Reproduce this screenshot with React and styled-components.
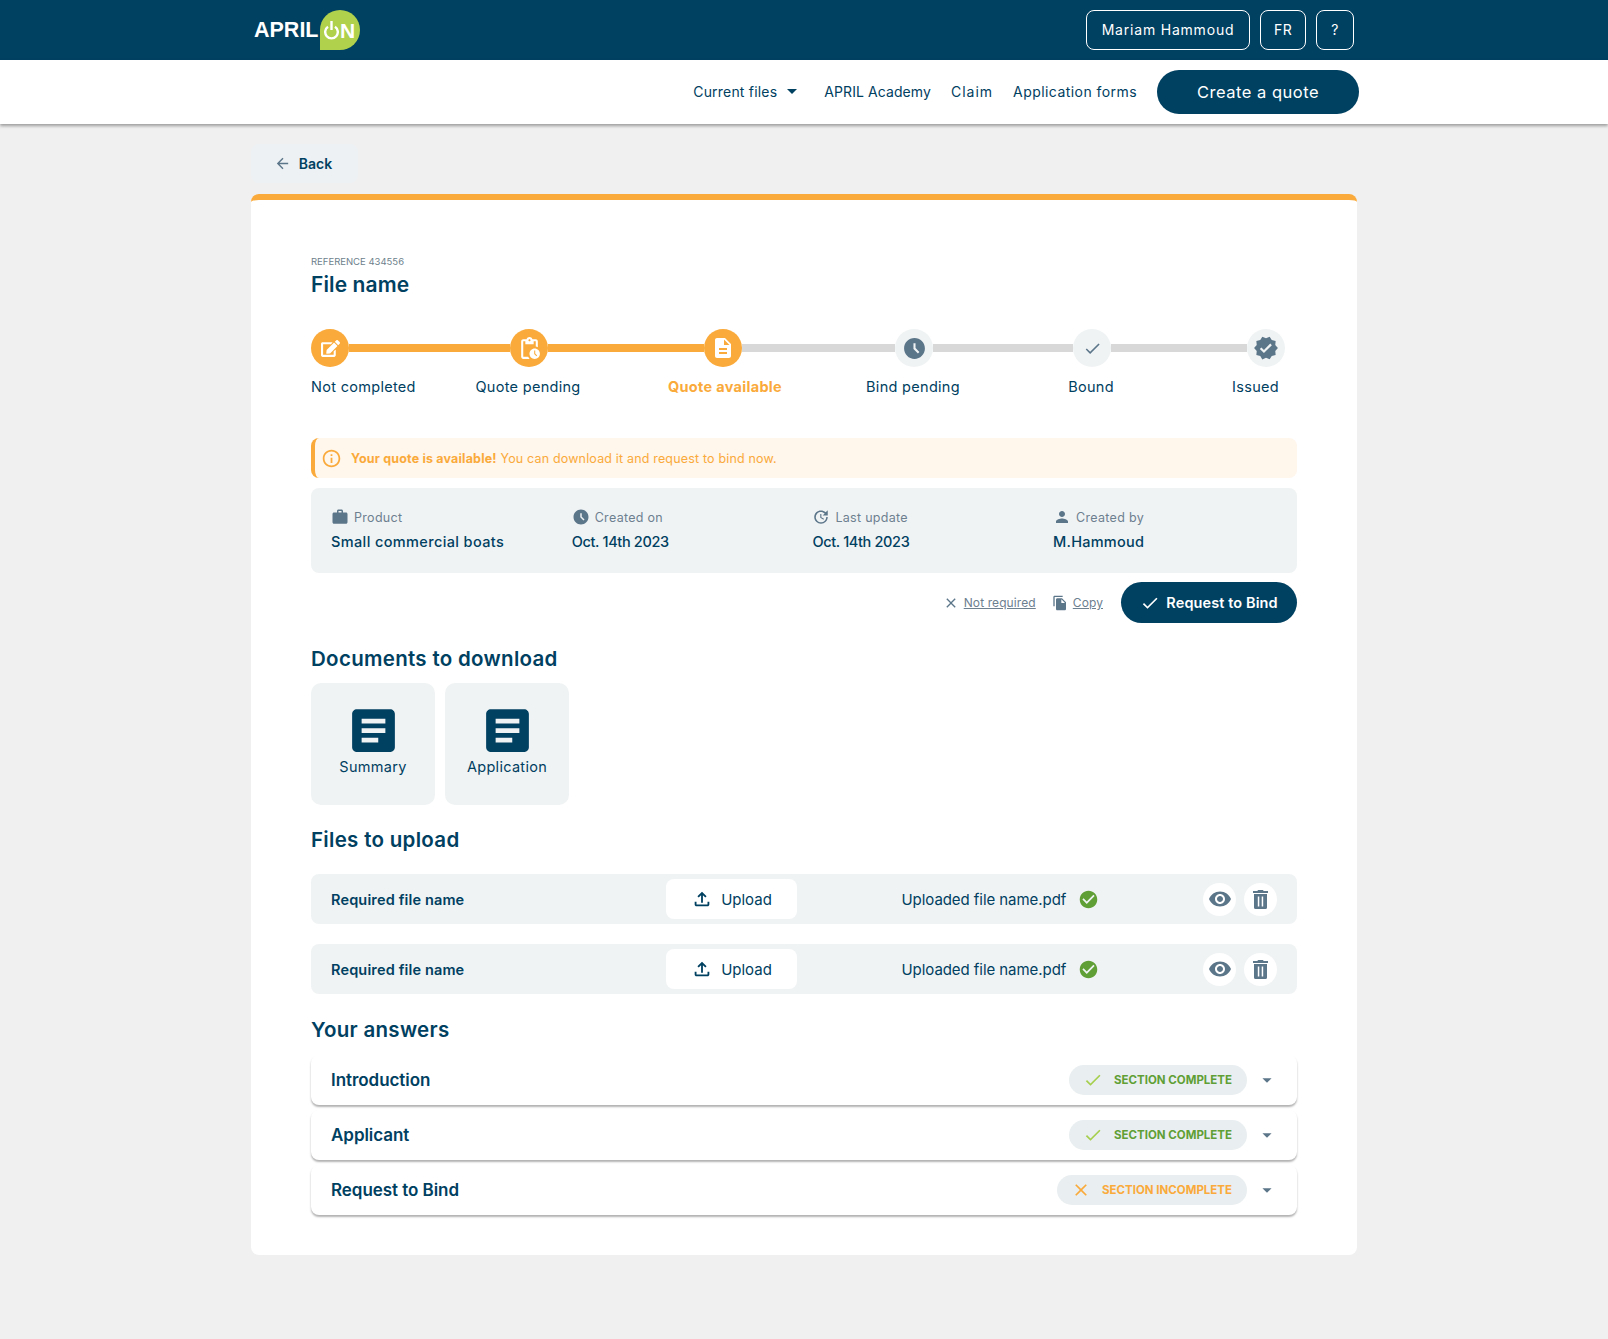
import styled, { createGlobalStyle } from "styled-components";
import {
  MdAccessTimeFilled,
  MdArrowBack,
  MdArrowDropDown,
  MdArticle,
  MdCheck,
  MdCheckCircle,
  MdClose,
  MdDescription,
  MdFileCopy,
  MdInfoOutline,
  MdOutlineFileUpload,
  MdPendingActions,
  MdPerson,
  MdUpdate,
  MdVerified,
  MdVisibility,
  MdWork,
} from "react-icons/md";
import { FaEdit } from "react-icons/fa";

const navy = "#004061";
const orange = "#faaa3a";
const slate = "#5b7589";
const panel = "#f0f3f4";

const GlobalStyle = createGlobalStyle`
  * { box-sizing: border-box; }
  body {
    margin: 0;
    background: #f0f0f0;
    color: ${navy};
    font-family: Inter, "Open Sans", sans-serif;
    font-size: 14px;
    letter-spacing: 0.3px;
  }
`;

const TopBar = styled.header`
  height: 60px;
  background: ${navy};
  display: flex;
  align-items: center;
  justify-content: space-between;
  padding: 0 254px;
`;

const Logo = styled.div`
  display: flex;
  align-items: center;
  gap: 1px;
`;

const LogoWord = styled.span`
  color: #fff;
  font-family: "Liberation Sans", Arial, sans-serif;
  font-weight: 700;
  font-size: 21.5px;
  letter-spacing: 0;
`;

const LogoDrop = styled.div`
  width: 40px;
  height: 40px;
  background: #afd14c;
  border-radius: 50% 50% 50% 0;
  display: flex;
  align-items: center;
  justify-content: center;
  gap: 1px;
  color: #fff;
  font-family: "Liberation Sans", Arial, sans-serif;
  font-size: 21px;
  font-weight: 700;
  letter-spacing: 0;
`;

const LogoLetter = styled.span`
  padding-top: 1px;
`;

const TopActions = styled.div`
  display: flex;
  gap: 10px;
`;

const TopButton = styled.button`
  width: ${(p) => p.$width}px;
  height: 40px;
  padding: 0 0 2px;
  border: 1px solid #fff;
  border-radius: 8px;
  background: transparent;
  color: #fff;
  font: inherit;
  letter-spacing: ${(p) => p.$spacing || 0.3}px;
`;

const NavBar = styled.nav`
  height: 64px;
  background: #fff;
  box-shadow: 0 2px 3px rgba(0, 0, 0, 0.35);
  display: flex;
  align-items: center;
  justify-content: flex-end;
  padding: 0 249px 0 251px;
  gap: 20px;
  position: relative;
`;

const NavLink = styled.a`
  display: flex;
  align-items: center;
  color: ${navy};
  font-size: 14px;
  letter-spacing: ${(p) => p.$spacing}px;
  padding-bottom: 2px;
`;

const NavCaret = styled(MdArrowDropDown)`
  font-size: 24px;
  color: ${navy};
  margin-left: 3px;
`;

const CreateButton = styled.button`
  width: 202px;
  height: 44px;
  border: 0;
  border-radius: 22px;
  background: ${navy};
  color: #fff;
  font: inherit;
  font-size: 16.5px;
  letter-spacing: 0.5px;
`;

const Page = styled.main`
  width: 1106px;
  margin: 0 auto;
  padding: 20px 0 85px;
`;

const BackButton = styled.button`
  width: 107px;
  height: 39px;
  padding: 0 3px 0 0;
  border: 0;
  border-radius: 8px;
  background: #edf1f3;
  color: ${navy};
  font: inherit;
  font-size: 14px;
  font-weight: 600;
  display: flex;
  align-items: center;
  justify-content: center;
  gap: 8px;
  svg {
    font-size: 17px;
    color: ${slate};
  }
`;

const Card = styled.section`
  margin-top: 11px;
  background: #fff;
  border-top: 6px solid ${orange};
  border-radius: 8px;
  padding: 55px 60px 40px;
`;

const Reference = styled.div`
  font-size: 9.5px;
  line-height: 14px;
  color: #6d7f8c;
  letter-spacing: 0;
`;

const FileTitle = styled.h1`
  margin: 2px 0 0;
  font-size: 21px;
  line-height: 28px;
  font-weight: 600;
  letter-spacing: 0.1px;
`;

const Track = styled.div`
  margin-top: 30px;
  display: flex;
  align-items: center;
  height: 38px;
`;

const StepCircle = styled.div`
  width: 38px;
  height: 38px;
  border-radius: 50%;
  flex: none;
  background: ${(p) => (p.$done ? orange : panel)};
  color: ${(p) => (p.$done ? "#fff" : slate)};
  display: flex;
  align-items: center;
  justify-content: center;
  font-size: ${(p) => p.$size || 22}px;
`;

const StepLine = styled.div`
  width: ${(p) => p.$width}px;
  height: 8px;
  flex: none;
  background: ${(p) => (p.$done ? orange : "#d8d8d8")};
`;

const Labels = styled.div`
  margin-top: 10px;
  display: grid;
  grid-template-columns: 134px 166px 228px 148px 208px 102px;
`;

const StepLabel = styled.div`
  line-height: 20px;
  font-size: 14.5px;
  letter-spacing: 0.3px;
  white-space: nowrap;
  text-align: ${(p) => p.$align || "center"};
  padding-right: ${(p) => p.$pad || 0}px;
  color: ${(p) => (p.$active ? orange : navy)};
  font-weight: ${(p) => (p.$active ? 700 : 400)};
`;

const Alert = styled.div`
  margin-top: 41px;
  height: 40px;
  background: #fff6ec;
  border-left: 4px solid ${orange};
  border-radius: 8px;
  display: flex;
  align-items: center;
  padding-left: 6px;
  color: ${orange};
  font-size: 12.5px;
  letter-spacing: 0.17px;
  white-space: pre;
  svg {
    font-size: 21px;
    margin-right: 9px;
  }
  strong {
    font-weight: 700;
    letter-spacing: 0.18px;
  }
`;

const InfoPanel = styled.div`
  margin-top: 10px;
  height: 85px;
  background: ${panel};
  border-radius: 8px;
  display: grid;
  grid-template-columns: repeat(4, 240.7px);
  padding: 19px 20px 0;
`;

const InfoLabel = styled.div`
  display: flex;
  align-items: center;
  gap: 5px;
  height: 20px;
  font-size: 12.5px;
  color: #6d8090;
  svg {
    font-size: 18px;
    color: ${slate};
  }
`;

const InfoValue = styled.div`
  margin-top: 5px;
  line-height: 20px;
  font-size: 14.5px;
  font-weight: 500;
  letter-spacing: ${(p) => p.$spacing}px;
`;

const Actions = styled.div`
  margin-top: 9px;
  height: 41px;
  display: flex;
  align-items: center;
  justify-content: flex-end;
`;

const TextAction = styled.a`
  display: flex;
  align-items: center;
  gap: 5px;
  margin-right: ${(p) => p.$gap}px;
  color: #6d8090;
  font-size: 12px;
  letter-spacing: 0.1px;
  span {
    text-decoration: underline;
  }
  svg {
    font-size: 16px;
    color: ${slate};
  }
`;

const BindButton = styled.button`
  width: 176px;
  height: 41px;
  border: 0;
  border-radius: 21px;
  background: ${navy};
  color: #fff;
  font: inherit;
  font-size: 14.5px;
  font-weight: 600;
  letter-spacing: 0.1px;
  display: flex;
  align-items: center;
  justify-content: center;
  gap: 6px;
  svg {
    font-size: 20px;
  }
`;

const SectionTitle = styled.h2`
  margin: ${(p) => p.$top}px 0 0;
  font-size: 20.5px;
  line-height: 30px;
  font-weight: 600;
  letter-spacing: 0.3px;
`;

const DocRow = styled.div`
  margin-top: 9px;
  display: flex;
  gap: 10px;
`;

const DocCard = styled.div`
  width: 124px;
  height: 122px;
  background: ${panel};
  border-radius: 10px;
  display: flex;
  flex-direction: column;
  align-items: center;
  padding-top: 19px;
  font-size: 14.5px;
  svg {
    font-size: 57px;
    color: ${navy};
  }
`;

const DocName = styled.span`
  margin-top: -2px;
  line-height: 20px;
`;

const UploadList = styled.div`
  margin-top: 19px;
  display: flex;
  flex-direction: column;
  gap: 20px;
`;

const UploadRow = styled.div`
  height: 50px;
  background: ${panel};
  border-radius: 8px;
  display: grid;
  grid-template-columns: 335px 235.5px 1fr auto;
  align-items: center;
  padding: 0 20px;
`;

const RequiredName = styled.div`
  font-size: 14.5px;
  font-weight: 600;
  letter-spacing: 0.15px;
`;

const UploadButton = styled.button`
  width: 131px;
  height: 40px;
  border: 0;
  border-radius: 8px;
  background: #fff;
  color: ${navy};
  font: inherit;
  font-size: 15px;
  display: flex;
  align-items: center;
  justify-content: center;
  gap: 8px;
  svg {
    font-size: 22px;
  }
`;

const Uploaded = styled.div`
  display: flex;
  align-items: center;
  gap: 12px;
  font-size: 15px;
  letter-spacing: -0.06px;
  svg {
    font-size: 21px;
    color: #5f9f35;
  }
`;

const RowIcons = styled.div`
  display: flex;
  gap: 8px;
`;

const RoundIcon = styled.button`
  width: 33px;
  height: 33px;
  padding: 0;
  border: 0;
  border-radius: 50%;
  background: #fff;
  color: ${slate};
  display: flex;
  align-items: center;
  justify-content: center;
  font-size: 24px;
`;

const Accordion = styled.div`
  margin-top: 10px;
  display: flex;
  flex-direction: column;
  gap: 5px;
`;

const AccordionRow = styled.div`
  height: 50px;
  background: #fff;
  border-radius: 8px;
  box-shadow: 0 2px 2px rgba(0, 0, 0, 0.3);
  display: flex;
  align-items: center;
  padding: 0 19px 0 20px;
`;

const AccordionTitle = styled.div`
  flex: 1;
  font-size: 17px;
  font-weight: 600;
  letter-spacing: -0.05px;
`;

const StatusPill = styled.div`
  height: 30px;
  border-radius: 15px;
  background: #e9eef0;
  display: flex;
  align-items: center;
  gap: 11px;
  padding: 0 15px 0 14px;
  margin-top: -1px;
  font-size: 11.5px;
  font-weight: 700;
  letter-spacing: 0;
  color: ${(p) => (p.$complete ? "#5f9f35" : orange)};
  svg {
    font-size: 20px;
    color: ${(p) => (p.$complete ? "#a5cf4c" : orange)};
  }
`;

const RowCaret = styled(MdArrowDropDown)`
  font-size: 22px;
  color: ${slate};
  margin: -1px 0 0 9px;
`;

const steps = [
  { label: "Not completed", icon: <FaEdit />, done: true, size: 19, align: "left" },
  { label: "Quote pending", icon: <MdPendingActions />, done: true, size: 25, width: 161 },
  { label: "Quote available", icon: <MdDescription />, done: true, size: 24, width: 156, active: true },
  { label: "Bind pending", icon: <MdAccessTimeFilled />, size: 25, width: 153 },
  { label: "Bound", icon: <MdCheck />, size: 19, width: 140 },
  { label: "Issued", icon: <MdVerified />, size: 26, width: 136, align: "right", pad: 18 },
];

const info = [
  { label: "Product", value: "Small commercial boats", icon: <MdWork />, spacing: 0.38 },
  { label: "Created on", value: "Oct. 14th 2023", icon: <MdAccessTimeFilled />, spacing: -0.35 },
  { label: "Last update", value: "Oct. 14th 2023", icon: <MdUpdate />, spacing: -0.35 },
  { label: "Created by", value: "M.Hammoud", icon: <MdPerson />, spacing: 0.25 },
];

const answers = [
  { title: "Introduction", complete: true },
  { title: "Applicant", complete: true },
  { title: "Request to Bind", complete: false },
];

function PowerIcon() {
  return (
    <svg width="15" height="21" viewBox="0 0 15 21" fill="none" stroke="#fff" strokeWidth="2.4">
      <path d="M4 6.800a6.300 6.300 0 1 0 7 0" />
      <path d="M7.500 1v9" />
    </svg>
  );
}

function TrashIcon() {
  return (
    <svg width="15" height="19" viewBox="0 0 15 19" fill="currentColor">
      <path d="M5 0h5l.6 1H15v2H0V1h4.400z" />
      <path fillRule="evenodd" d="M1 4h13v13.500a1.500 1.500 0 0 1-1.500 1.500h-10A1.500 1.500 0 0 1 1 17.500zM4.800 6.500v10h1.500v-10zm3.900 0v10h1.500v-10z" />
    </svg>
  );
}

function UploadFile() {
  return (
    <UploadRow>
      <RequiredName>Required file name</RequiredName>
      <UploadButton>
        <MdOutlineFileUpload />
        Upload
      </UploadButton>
      <Uploaded>
        Uploaded file name.pdf
        <MdCheckCircle />
      </Uploaded>
      <RowIcons>
        <RoundIcon>
          <MdVisibility />
        </RoundIcon>
        <RoundIcon>
          <TrashIcon />
        </RoundIcon>
      </RowIcons>
    </UploadRow>
  );
}

export default function App() {
  return (
    <>
      <GlobalStyle />
      <TopBar>
        <Logo>
          <LogoWord>APRIL</LogoWord>
          <LogoDrop>
            <PowerIcon />
            <LogoLetter>N</LogoLetter>
          </LogoDrop>
        </Logo>
        <TopActions>
          <TopButton $width={164} $spacing={0.8}>Mariam Hammoud</TopButton>
          <TopButton $width={46}>FR</TopButton>
          <TopButton $width={38}>?</TopButton>
        </TopActions>
      </TopBar>
      <NavBar>
        <NavLink $spacing={0.2}>
          Current files
          <NavCaret />
        </NavLink>
        <NavLink $spacing={0.08}>APRIL Academy</NavLink>
        <NavLink $spacing={1}>Claim</NavLink>
        <NavLink $spacing={0.44}>Application forms</NavLink>
        <CreateButton>Create a quote</CreateButton>
      </NavBar>
      <Page>
        <BackButton>
          <MdArrowBack />
          Back
        </BackButton>
        <Card>
          <Reference>REFERENCE 434556</Reference>
          <FileTitle>File name</FileTitle>
          <Track>
            {steps.flatMap((s) => [
              s.width ? <StepLine key={s.label + "-line"} $width={s.width} $done={s.done} /> : null,
              <StepCircle key={s.label} $done={s.done} $size={s.size}>
                {s.icon}
              </StepCircle>,
            ])}
          </Track>
          <Labels>
            {steps.map((s) => (
              <StepLabel key={s.label} $active={s.active} $align={s.align} $pad={s.pad}>
                {s.label}
              </StepLabel>
            ))}
          </Labels>
          <Alert>
            <MdInfoOutline />
            <strong>Your quote is available!</strong> You can download it and request to bind now.
          </Alert>
          <InfoPanel>
            {info.map((item) => (
              <div key={item.label}>
                <InfoLabel>
                  {item.icon}
                  {item.label}
                </InfoLabel>
                <InfoValue $spacing={item.spacing}>{item.value}</InfoValue>
              </div>
            ))}
          </InfoPanel>
          <Actions>
            <TextAction $gap={16}>
              <MdClose />
              <span>Not required</span>
            </TextAction>
            <TextAction $gap={18}>
              <MdFileCopy />
              <span>Copy</span>
            </TextAction>
            <BindButton>
              <MdCheck />
              Request to Bind
            </BindButton>
          </Actions>
          <SectionTitle $top={21}>Documents to download</SectionTitle>
          <DocRow>
            <DocCard>
              <MdArticle />
              <DocName>Summary</DocName>
            </DocCard>
            <DocCard>
              <MdArticle />
              <DocName>Application</DocName>
            </DocCard>
          </DocRow>
          <SectionTitle $top={20}>Files to upload</SectionTitle>
          <UploadList>
            <UploadFile />
            <UploadFile />
          </UploadList>
          <SectionTitle $top={21}>Your answers</SectionTitle>
          <Accordion>
            {answers.map((a) => (
              <AccordionRow key={a.title}>
                <AccordionTitle>{a.title}</AccordionTitle>
                <StatusPill $complete={a.complete}>
                  {a.complete ? <MdCheck /> : <MdClose />}
                  {a.complete ? "SECTION COMPLETE" : "SECTION INCOMPLETE"}
                </StatusPill>
                <RowCaret />
              </AccordionRow>
            ))}
          </Accordion>
        </Card>
      </Page>
    </>
  );
}
